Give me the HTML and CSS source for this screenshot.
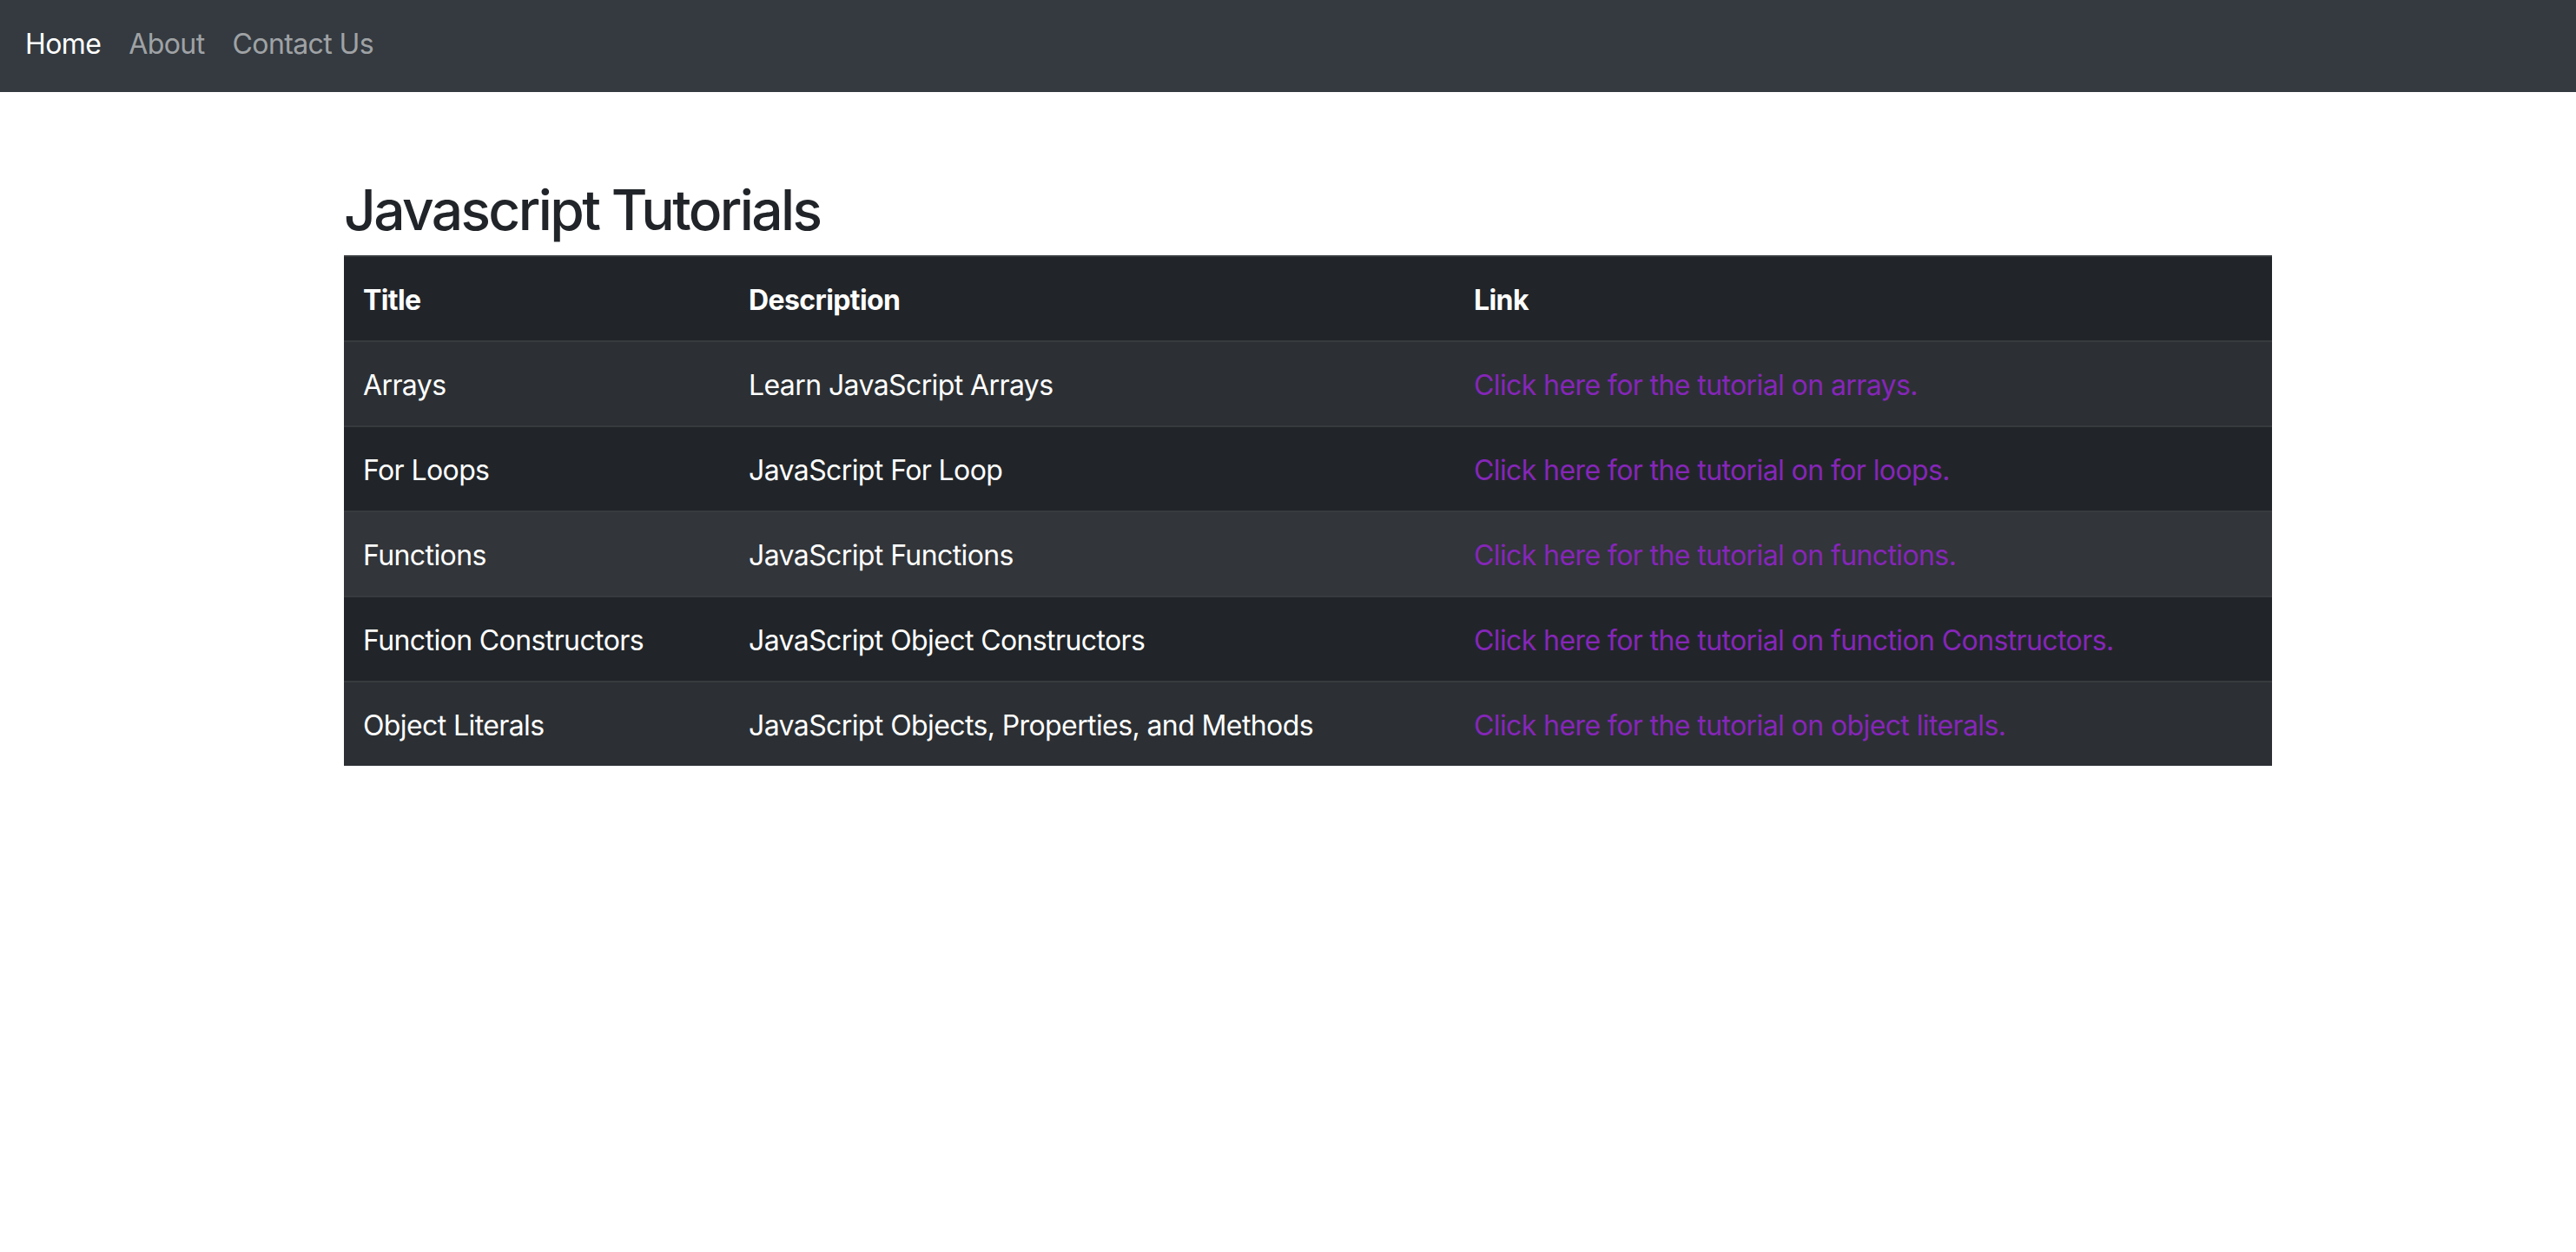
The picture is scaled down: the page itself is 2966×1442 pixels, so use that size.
FILE: index.html
```html
<!DOCTYPE html>
<html lang="en">
<head>
<meta charset="utf-8">
<title>Javascript Tutorials</title>
<link rel="stylesheet" href="styles.css">
</head>
<body>
<nav class="navbar">
  <a class="nav-link active" href="#">Home</a>
  <a class="nav-link" href="#">About</a>
  <a class="nav-link" href="#">Contact Us</a>
</nav>
<main class="container">
  <h2 class="title">Javascript Tutorials</h2>
  <table class="tutorials">
    <colgroup>
      <col class="c1"><col class="c2"><col class="c3">
    </colgroup>
    <thead>
      <tr><th>Title</th><th>Description</th><th>Link</th></tr>
    </thead>
    <tbody>
      <tr class="odd"><td>Arrays</td><td>Learn JavaScript Arrays</td><td><a class="tlink" href="#">Click here for the tutorial on arrays.</a></td></tr>
      <tr class="even"><td>For Loops</td><td>JavaScript For Loop</td><td><a class="tlink" href="#">Click here for the tutorial on for loops.</a></td></tr>
      <tr class="hover"><td>Functions</td><td>JavaScript Functions</td><td><a class="tlink" href="#">Click here for the tutorial on functions.</a></td></tr>
      <tr class="even"><td>Function Constructors</td><td>JavaScript Object Constructors</td><td><a class="tlink" href="#">Click here for the tutorial on function Constructors.</a></td></tr>
      <tr class="odd"><td>Object Literals</td><td>JavaScript Objects, Properties, and Methods</td><td><a class="tlink" href="#">Click here for the tutorial on object literals.</a></td></tr>
    </tbody>
  </table>
</main>
</body>
</html>
```
FILE: styles.css
```css
html, body {
  margin: 0;
  padding: 0;
  background: #fff;
}
body {
  font-family: "Inter", "Roboto", "Liberation Sans", sans-serif;
  font-size: 32px;
  line-height: 48px;
  letter-spacing: -0.6px;
  color: #212529;
}
.navbar {
  height: 106px;
  background: #343a40;
  display: flex;
  align-items: center;
  padding: 0 13px 4px;
  box-sizing: border-box;
}
.nav-link {
  padding: 0 16px;
  color: rgba(255, 255, 255, 0.55);
  text-decoration: none;
  font-size: 32px;
}
.nav-link.active {
  color: #fff;
}
.container {
  padding: 97px 0 0 396px;
}
.title {
  margin: 0 0 14px;
  font-size: 64px;
  line-height: 77px;
  font-weight: 500;
  letter-spacing: -2.6px;
  color: #212529;
}
.tutorials {
  width: 2220px;
  border-collapse: collapse;
  table-layout: fixed;
  color: #fff;
}
.c1 { width: 444px; }
.c2 { width: 835px; }
.c3 { width: 941px; }
.tutorials th,
.tutorials td {
  text-align: left;
  padding: 26px 22px 22px;
  border-top: 2px solid #373b3e;
  white-space: nowrap;
}
.tutorials thead tr { background: #212529; }
.tutorials th { font-weight: 700; }
.odd { background: #2c3034; }
.even { background: #212529; }
.hover { background: #323539; }
.tlink {
  color: #8526b8;
  text-decoration: none;
}
```
